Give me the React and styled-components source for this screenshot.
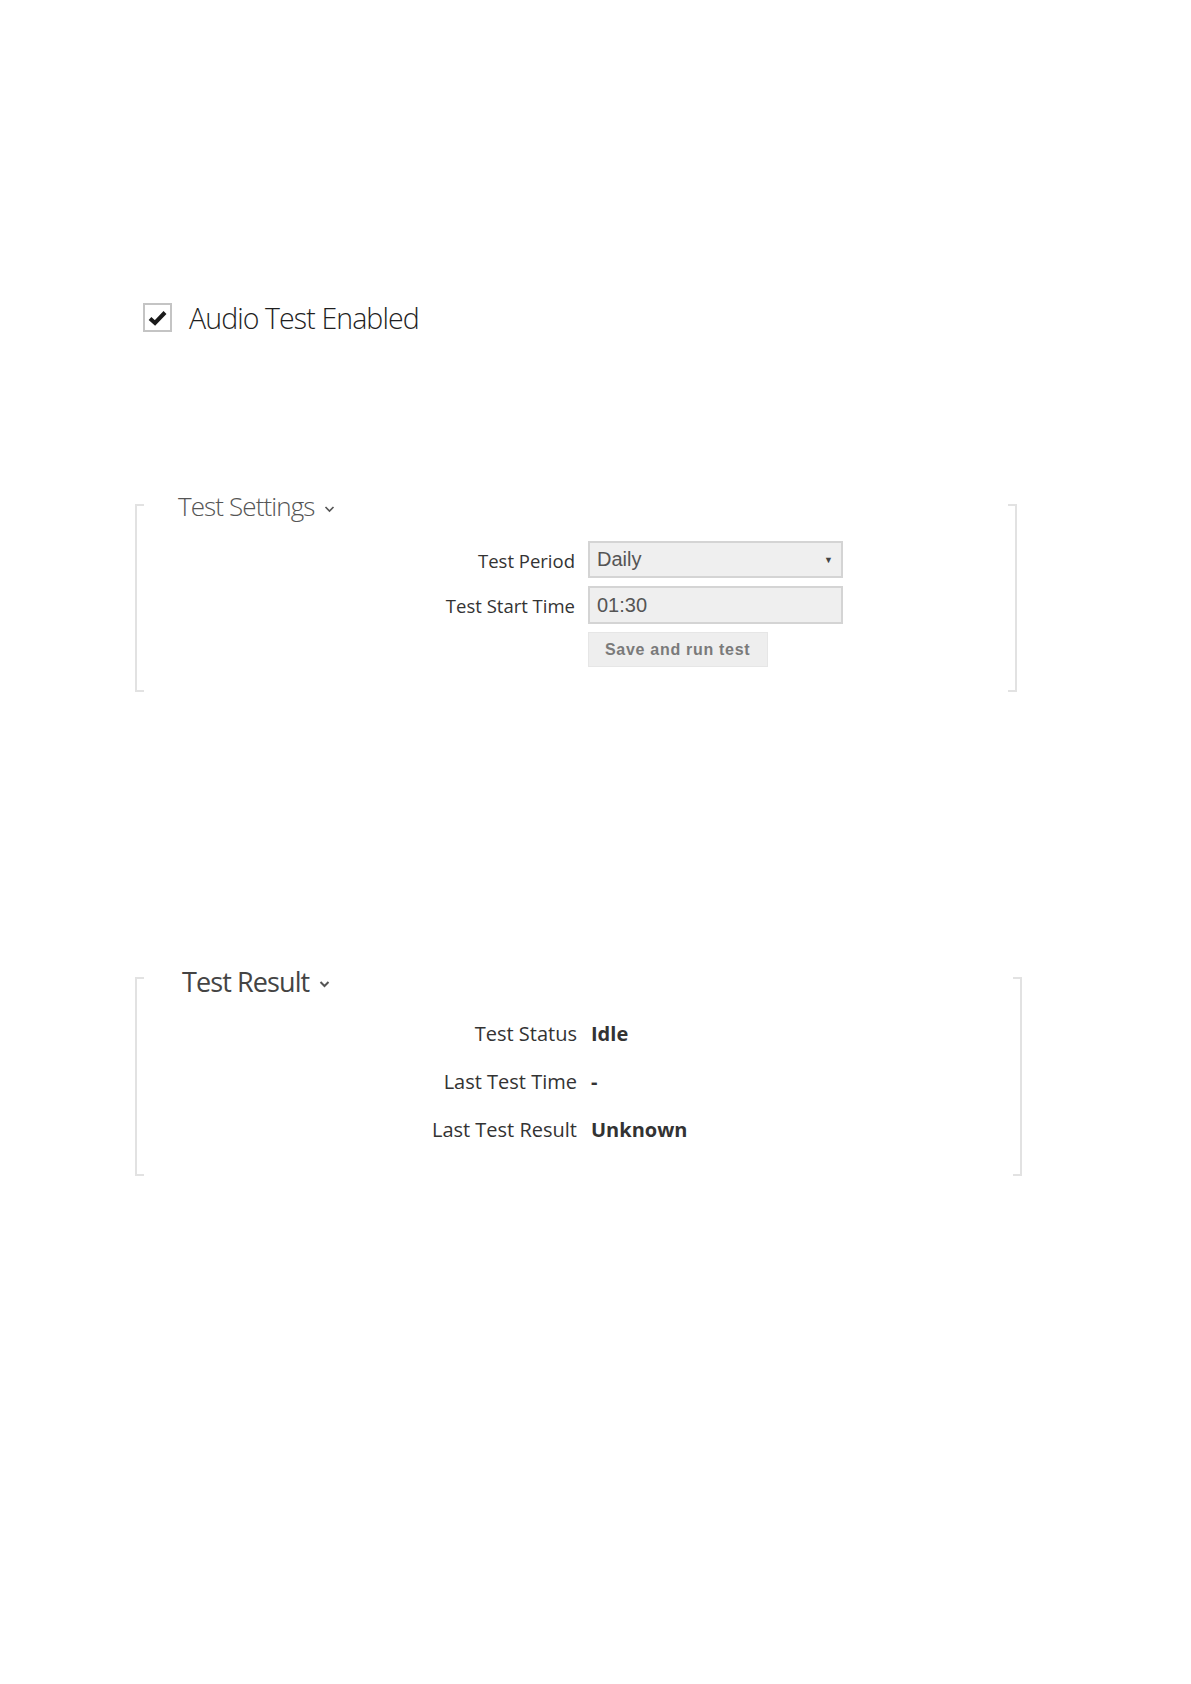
import React from "react";
import styled, { createGlobalStyle } from "styled-components";

const Global = createGlobalStyle`
  html, body { margin: 0; padding: 0; background: #fff; }
  body { font-family: "Open Sans", "Noto Sans", sans-serif; color: #333; }
`;

const Page = styled.div`
  width: 1191px;
  min-height: 1684px;
  padding-top: 303px;
  box-sizing: border-box;
  display: flex;
  flex-direction: column;
  align-items: flex-start;
`;

const CheckRow = styled.label`
  display: flex;
  align-items: center;
  gap: 17px;
  margin-left: 143px;
  height: 29px;
`;

const CheckBox = styled.span`
  width: 29px;
  height: 29px;
  box-sizing: border-box;
  border: 2px solid #c4c4c4;
  background: #fff;
  display: flex;
  align-items: center;
  justify-content: center;
`;

const CheckLabel = styled.span`
  font-size: 28.5px;
  font-weight: 300;
  color: #1f1f1f;
  line-height: 36px;
  letter-spacing: -0.9px;
`;

const tick = (c) => `linear-gradient(${c}, ${c})`;

const Section = styled.section`
  display: flex;
  flex-direction: column;
  align-items: flex-start;
  margin-left: 135px;
  width: ${(p) => p.$width}px;
  margin-top: ${(p) => p.$top}px;
  box-sizing: border-box;
  border-left: 2px solid #e2e2e2;
  border-right: 2px solid #e2e2e2;
  padding-bottom: ${(p) => p.$bottom}px;
  background-image: ${tick("#e2e2e2")}, ${tick("#e2e2e2")}, ${tick("#e2e2e2")}, ${tick("#e2e2e2")};
  background-size: 7px 2px;
  background-repeat: no-repeat;
  background-position: left top, right top, left bottom, right bottom;
`;

const Heading = styled.h2`
  margin: ${(p) => p.$mt}px 0 0 ${(p) => p.$indent}px;
  font-size: ${(p) => p.$size}px;
  line-height: ${(p) => p.$lh}px;
  font-weight: ${(p) => p.$weight};
  color: ${(p) => p.$color};
  display: flex;
  align-items: center;
  gap: 10px;
  letter-spacing: -0.9px;
`;

const Chevron = ({ w = 1.6 }) => (
  <svg width="11" height="8" viewBox="0 0 11 8" style={{ marginTop: 4 }}>
    <path d="M1.5 2 L5.5 6 L9.5 2" fill="none" stroke="#555" strokeWidth={w} />
  </svg>
);

const FormGrid = styled.div`
  display: grid;
  grid-template-columns: ${(p) => p.$labelW}px auto;
  column-gap: ${(p) => p.$gap}px;
  row-gap: ${(p) => p.$rowGap}px;
  margin-top: ${(p) => p.$top}px;
  align-items: center;
`;

const Label = styled.div`
  text-align: right;
  font-size: ${(p) => p.$size || 18.5}px;
  color: #333;
  line-height: ${(p) => p.$lh || 35}px;
  padding-top: ${(p) => p.$pt || 0}px;
`;

const Field = styled.div`
  width: 255px;
  height: ${(p) => p.$h}px;
  box-sizing: border-box;
  border: 2px solid #d4d4d4;
  background: #efefef;
  display: flex;
  align-items: center;
  justify-content: space-between;
  padding: 0 8px 0 7px;
  font-family: "Liberation Sans", Arial, sans-serif;
  font-size: 20px;
  color: #555;
`;

const Arrow = styled.span`
  font-size: 9px;
  color: #444;
  margin-top: 1px;
`;

const Button = styled.button`
  grid-column: 2;
  width: 180px;
  height: 35px;
  box-sizing: border-box;
  border: 1px solid #e6e6e6;
  background: #eeeeee;
  font-family: "Liberation Sans", Arial, sans-serif;
  font-weight: 700;
  font-size: 16px;
  letter-spacing: 0.7px;
  color: #7a7a7a;
  text-align: left;
  padding: 0 0 0 16px;
  cursor: pointer;
`;

const Value = styled.div`
  font-size: 20px;
  font-weight: 700;
  color: #333;
  line-height: 48px;
`;

export default function App() {
  return (
    <Page>
      <Global />
      <CheckRow>
        <CheckBox>
          <svg width="19" height="16" viewBox="0 0 19 16">
            <path d="M2 8.5 L7 13 L17 2.5" fill="none" stroke="#1a1a1a" strokeWidth="4" strokeLinejoin="miter" />
          </svg>
        </CheckBox>
        <CheckLabel>Audio Test Enabled</CheckLabel>
      </CheckRow>

      <Section $width={882} $top={172} $bottom={25}>
        <Heading $mt={-13} $indent={41} $size={26} $lh={31} $weight={300} $color="#555">
          Test Settings <Chevron />
        </Heading>
        <FormGrid $labelW={438} $gap={13} $rowGap={8} $top={19}>
          <Label $pt={2}>Test Period</Label>
          <Field $h={37}>
            Daily <Arrow>▼</Arrow>
          </Field>
          <Label $pt={2} $lh={36}>Test Start Time</Label>
          <Field $h={38}>01:30</Field>
          <Button type="button">Save and run test</Button>
        </FormGrid>
      </Section>

      <Section $width={887} $top={285} $bottom={22}>
        <Heading $mt={-12} $indent={45} $size={27} $lh={34} $weight={400} $color="#444">
          Test Result <Chevron w={2} />
        </Heading>
        <FormGrid $labelW={440} $gap={14} $rowGap={0} $top={11}>
          <Label $size={20} $lh={48}>Test Status</Label>
          <Value>Idle</Value>
          <Label $size={20} $lh={48}>Last Test Time</Label>
          <Value>-</Value>
          <Label $size={20} $lh={48}>Last Test Result</Label>
          <Value>Unknown</Value>
        </FormGrid>
      </Section>
    </Page>
  );
}
